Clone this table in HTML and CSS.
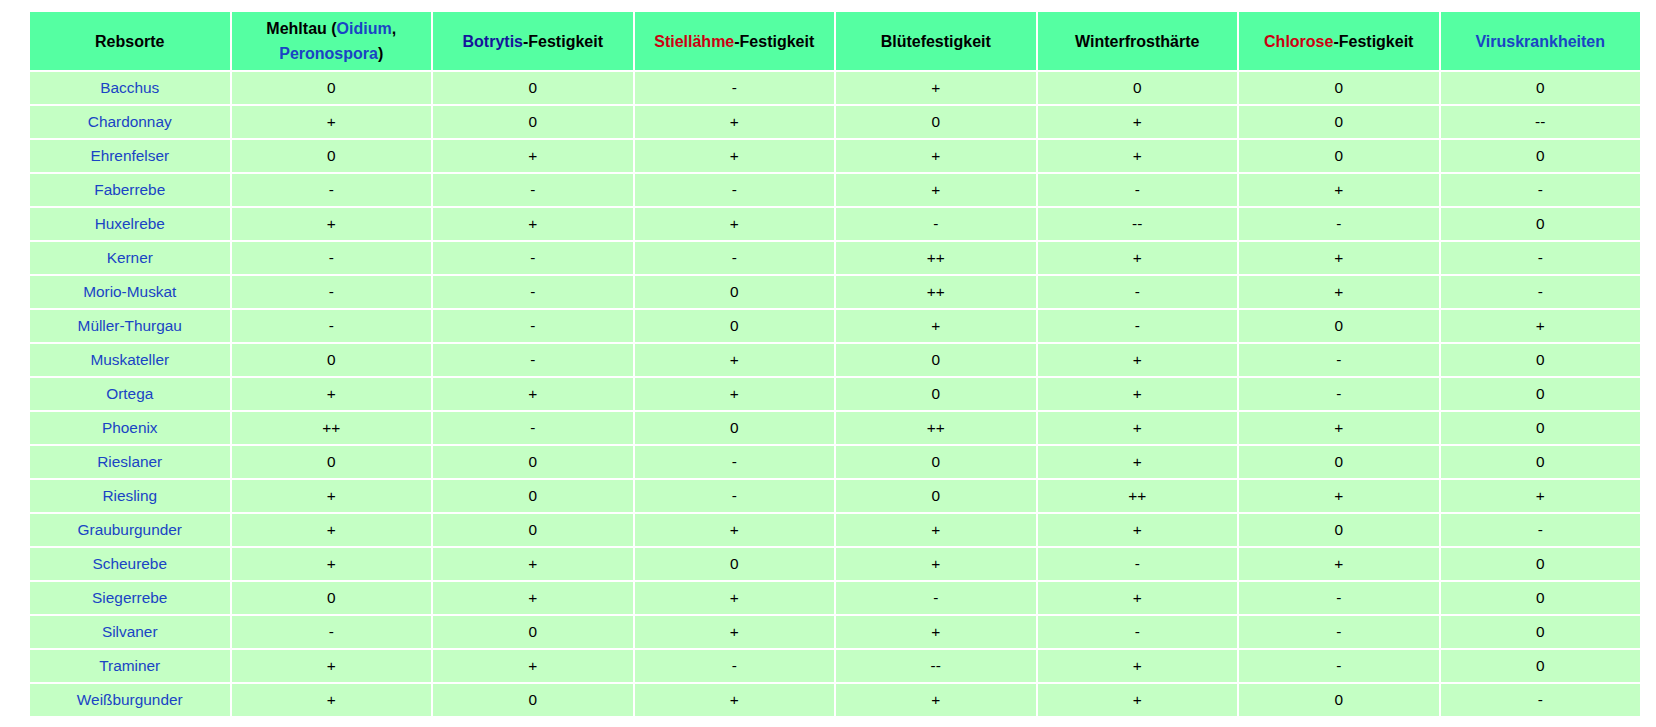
FILE: index.html
```html
<!DOCTYPE html>
<html lang="de">
<head>
<meta charset="utf-8">
<title>Rebsorten</title>
<link rel="stylesheet" href="styles.css">
</head>
<body>
<div class="wrap">
<table class="grid">
<thead>
<tr>
<th>Rebsorte</th>
<th>Mehltau (<a class="lnk">Oidium</a>,<br><a class="lnk">Peronospora</a>)</th>
<th><a class="navy">Botrytis</a>-Festigkeit</th>
<th><a class="red">Stiellähme</a>-Festigkeit</th>
<th>Blütefestigkeit</th>
<th>Winterfrosthärte</th>
<th><a class="red">Chlorose</a>-Festigkeit</th>
<th><a class="lnk">Viruskrankheiten</a></th>
</tr>
</thead>
<tbody>
<tr><td><a class="lnk">Bacchus</a></td><td>0</td><td>0</td><td>-</td><td>+</td><td>0</td><td>0</td><td>0</td></tr>
<tr><td><a class="lnk">Chardonnay</a></td><td>+</td><td>0</td><td>+</td><td>0</td><td>+</td><td>0</td><td>--</td></tr>
<tr><td><a class="lnk">Ehrenfelser</a></td><td>0</td><td>+</td><td>+</td><td>+</td><td>+</td><td>0</td><td>0</td></tr>
<tr><td><a class="lnk">Faberrebe</a></td><td>-</td><td>-</td><td>-</td><td>+</td><td>-</td><td>+</td><td>-</td></tr>
<tr><td><a class="lnk">Huxelrebe</a></td><td>+</td><td>+</td><td>+</td><td>-</td><td>--</td><td>-</td><td>0</td></tr>
<tr><td><a class="lnk">Kerner</a></td><td>-</td><td>-</td><td>-</td><td>++</td><td>+</td><td>+</td><td>-</td></tr>
<tr><td><a class="lnk">Morio-Muskat</a></td><td>-</td><td>-</td><td>0</td><td>++</td><td>-</td><td>+</td><td>-</td></tr>
<tr><td><a class="lnk">Müller-Thurgau</a></td><td>-</td><td>-</td><td>0</td><td>+</td><td>-</td><td>0</td><td>+</td></tr>
<tr><td><a class="lnk">Muskateller</a></td><td>0</td><td>-</td><td>+</td><td>0</td><td>+</td><td>-</td><td>0</td></tr>
<tr><td><a class="lnk">Ortega</a></td><td>+</td><td>+</td><td>+</td><td>0</td><td>+</td><td>-</td><td>0</td></tr>
<tr><td><a class="lnk">Phoenix</a></td><td>++</td><td>-</td><td>0</td><td>++</td><td>+</td><td>+</td><td>0</td></tr>
<tr><td><a class="lnk">Rieslaner</a></td><td>0</td><td>0</td><td>-</td><td>0</td><td>+</td><td>0</td><td>0</td></tr>
<tr><td><a class="lnk">Riesling</a></td><td>+</td><td>0</td><td>-</td><td>0</td><td>++</td><td>+</td><td>+</td></tr>
<tr><td><a class="lnk">Grauburgunder</a></td><td>+</td><td>0</td><td>+</td><td>+</td><td>+</td><td>0</td><td>-</td></tr>
<tr><td><a class="lnk">Scheurebe</a></td><td>+</td><td>+</td><td>0</td><td>+</td><td>-</td><td>+</td><td>0</td></tr>
<tr><td><a class="lnk">Siegerrebe</a></td><td>0</td><td>+</td><td>+</td><td>-</td><td>+</td><td>-</td><td>0</td></tr>
<tr><td><a class="lnk">Silvaner</a></td><td>-</td><td>0</td><td>+</td><td>+</td><td>-</td><td>-</td><td>0</td></tr>
<tr><td><a class="lnk">Traminer</a></td><td>+</td><td>+</td><td>-</td><td>--</td><td>+</td><td>-</td><td>0</td></tr>
<tr><td><a class="lnk">Weißburgunder</a></td><td>+</td><td>0</td><td>+</td><td>+</td><td>+</td><td>0</td><td>-</td></tr>
</tbody>
</table>
</div>
</body>
</html>
```

FILE: styles.css
```css
html, body {
  margin: 0;
  padding: 0;
  background: #ffffff;
}
.wrap {
  padding: 10px 14px 0 28px;
}
.grid {
  width: 100%;
  table-layout: fixed;
  border-collapse: separate;
  border-spacing: 2px;
  font-family: "Liberation Sans", Arial, sans-serif;
  color: #000000;
}
.grid th {
  background: #55ffa2;
  height: 58px;
  padding: 0 4px;
  box-sizing: border-box;
  font-size: 16px;
  font-weight: bold;
  line-height: 25px;
  text-align: center;
  vertical-align: middle;
}
.grid td {
  background: #c4ffc4;
  height: 32px;
  padding: 0 4px;
  box-sizing: border-box;
  font-size: 15.4px;
  line-height: 18px;
  text-align: center;
  vertical-align: middle;
}
.lnk {
  color: #1a44c4;
  text-decoration: none;
}
.navy {
  color: #15159a;
  text-decoration: none;
}
.red {
  color: #cc0012;
  text-decoration: none;
}
```
